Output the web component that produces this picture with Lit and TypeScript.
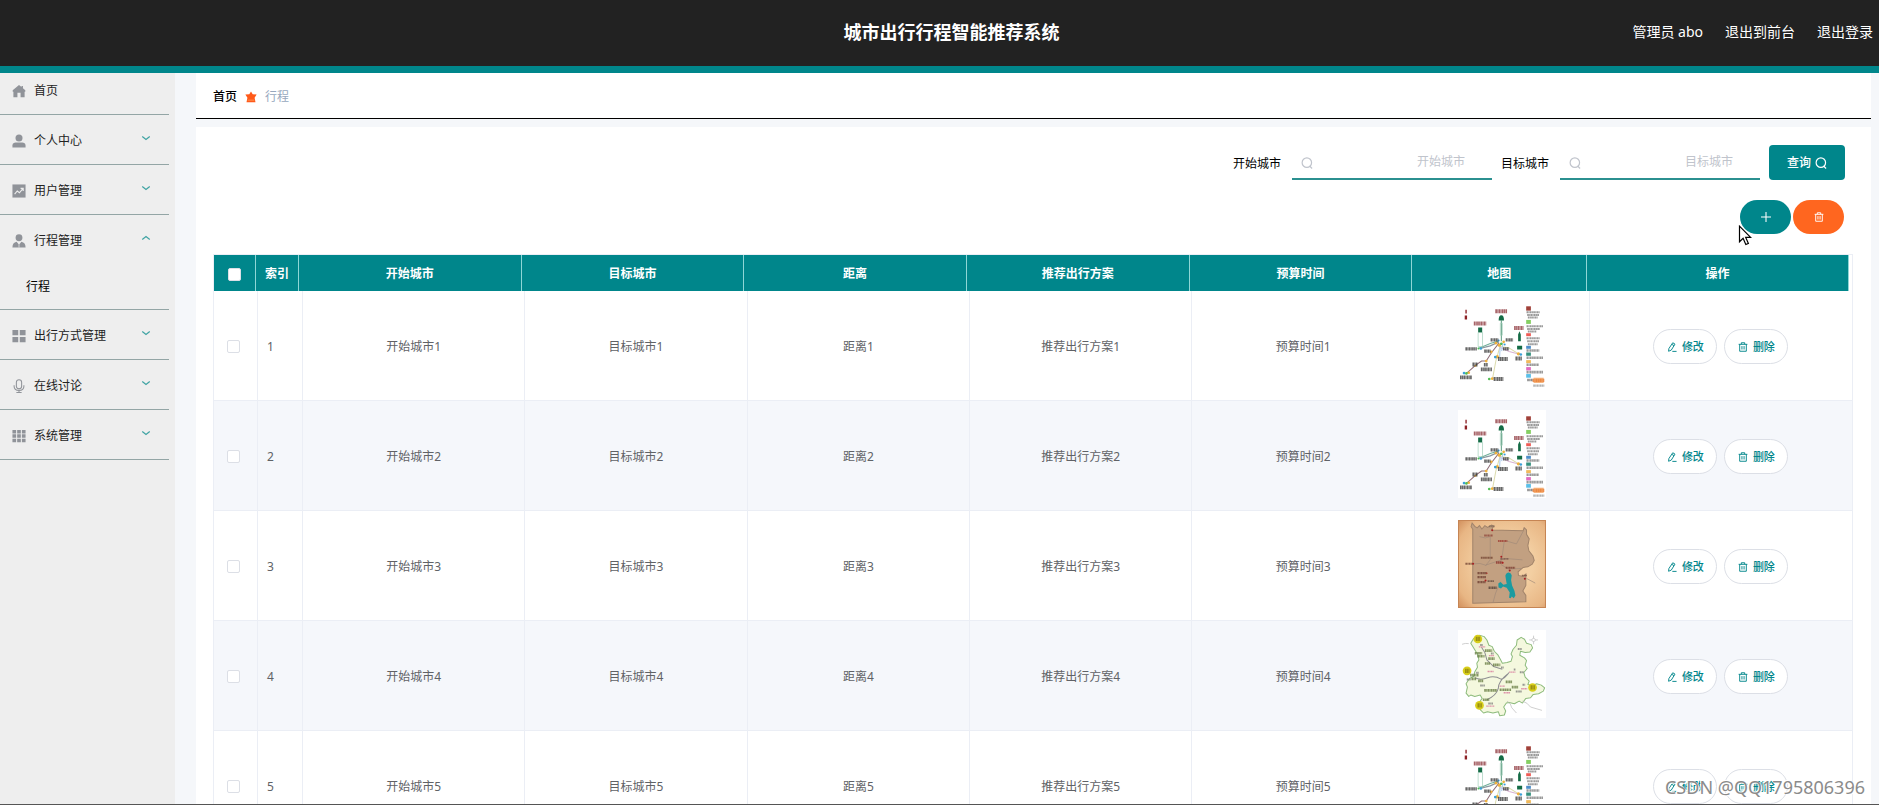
import { LitElement, html, svg, css, nothing } from "lit";
import { customElement, state } from "lit/decorators.js";

interface MenuEntry {
  label: string;
  icon: string;
  children?: string[];
  open?: boolean;
}

const icons: Record<string, unknown> = {
  home: svg`<path fill="currentColor" d="M8 1 0.8 7.2v1.6H1.6V15h4.6v-5h3.6v5h4.6V8.800h.8V7.200L12.500 4.900V2.300h-1.600v1.200z"/>`,
  user: svg`<circle cx="8" cy="4.500" r="4" fill="currentColor"/><path fill="currentColor" d="M.5 15.500v-2.300C.5 10.600 2.400 9.700 4.200 9.700h7.600c1.800 0 3.700.9 3.700 3.500v2.300z"/>`,
  chart: svg`<path fill="currentColor" d="M.5.5h15v15H.5z"/><path fill="none" stroke="#eee" stroke-width="1.300" d="M3 11.500 6 8l2.500 2L12.700 5M9.800 5h3v3"/>`,
  custom: svg`<circle cx="8" cy="4.300" r="3.900" fill="currentColor"/><path fill="currentColor" d="M.5 15.500c0-4 1.500-6 4.800-6.600L8 12.300l2.700-3.400c3.300.6 4.800 2.600 4.800 6.600z"/><path stroke="#eee" stroke-width=".8" d="M8 12v3.500"/>`,
  grid4: svg`<path fill="currentColor" d="M.5 1h6.600v6H.5zM8.900 1h6.600v6H8.900zM.5 9h6.600v6H.5zM8.900 9h6.600v6H8.900z"/>`,
  mic: svg`<rect x="5" y=".8" width="6" height="10.400" rx="3" fill="none" stroke="currentColor" stroke-width="1.200"/><path fill="none" stroke="currentColor" stroke-width="1.200" d="M2.400 7v1.200C2.400 11.300 5 13 8 13s5.600-1.700 5.600-4.800V7M8 13v2.300M5 15.400h6"/>`,
  grid9: svg`<path fill="currentColor" d="M.5 1h4.200v4H.5zM5.900 1h4.200v4H5.900zM11.300 1h4.200v4h-4.200zM.5 6h4.200v4H.5zM5.900 6h4.200v4H5.900zM11.300 6h4.200v4h-4.200zM.5 11h4.200v4H.5zM5.900 11h4.200v4H5.900zM11.300 11h4.200v4h-4.200z"/>`,
  down: svg`<path fill="none" stroke="currentColor" stroke-width="1.900" d="m2 5.500 6 5 6-5"/>`,
  up: svg`<path fill="none" stroke="currentColor" stroke-width="1.900" d="m2 10.500 6-5 6 5"/>`,
  search: svg`<circle cx="7.800" cy="7.500" r="6.300" fill="none" stroke="currentColor" stroke-width="1.600"/><path stroke="currentColor" stroke-width="1.600" d="m11.500 12 3.300 3.300"/>`,
  plus: svg`<path stroke="currentColor" stroke-width="1.700" d="M8 0v16M0 8h16"/>`,
  trash: svg`<path fill="none" stroke="currentColor" stroke-width="1.500" d="M1 3.700h14M5.300 3.500V1.200h5.400v2.300M2.700 3.700v11.100h10.600V3.700M6.300 6.500v5.500M9.700 6.500v5.500"/>`,
  edit: svg`<path fill="none" stroke="currentColor" stroke-width="1.500" d="m9.200 1.200 3.600 2.200-6 9.600-4.300 1.800.5-4.300zM7.800 3.800l3.500 2.100M8.500 15h6.800"/>`,
  star: svg`<path fill="#ff5a1a" d="m8 .5 2.300 3.700 5.200.6-2.700 4.300 1.200 6H2l1.200-6L.5 4.800l5.200-.6z"/><path fill="#ff8a4a" d="M3.500 11.500h9V13h-9z"/>`,
};

const icon = (name: string, size: string) =>
  html`<svg class="icon ${size}" viewBox="0 0 16 16" aria-hidden="true">${icons[name]}</svg>`;

/* A row of tiny illegible lettering on a thumbnail: x, y, length, colour, height. */
const scribble = (x: number, y: number, len: number, color = "#444", h = 7) => svg`
  <path d="M${x} ${y}h${len}" stroke=${color} stroke-width=${h} stroke-dasharray="5 1 3 1" opacity=".75"/>`;

const metroMap = () => html`
  <svg class="thumb" viewBox="0 0 262 265" preserveAspectRatio="none" role="img" aria-label="地图">
    <rect width="262" height="265" fill="#fff"/>
    <g fill="none" stroke-width="3">
      <path stroke="#8c6a75" d="m26 220 26-23 18-13h14l16-26 22-28"/>
      <path stroke="#8a98a0" stroke-width="4" d="m66 146 30-8 26-12"/>
      <path stroke="#6fae98" d="m60 146 38-16 22-6"/>
      <path stroke="#d9b3d4" d="m126 143 26 12 34 9"/>
      <path stroke="#dcdcae" d="m103 236 10-54 12-42 26 4 26 16"/>
      <path stroke="#a8c8ec" d="m126 130-2 42-10 2M134 130l-4 24"/>
      <path stroke="#5a9a80" d="M129 62v62"/>
      <path stroke="#9ccbb5" stroke-width="2" d="M60 98h13v42H60zM126 70h6v36h-6z"/>
    </g>
    <g fill="#146b45">
      <path d="M121 62q0-16 8-16t8 16zM60 83h12v14H60zM179 104l4-10 4 10v20h-8zM176 138h15v11h-15z"/>
    </g>
    <g fill="#f0b13c">
      <circle cx="123" cy="136" r="5"/><circle cx="136" cy="126" r="4"/><circle cx="113" cy="130" r="4"/>
      <circle cx="99" cy="156" r="4"/><circle cx="84" cy="184" r="4"/><circle cx="52" cy="198" r="3"/>
      <circle cx="180" cy="162" r="5"/><circle cx="117" cy="171" r="5"/><circle cx="32" cy="219" r="4"/><circle cx="102" cy="237" r="4"/>
    </g>
    <g fill="#3ba0d8">
      <circle cx="121" cy="122" r="3"/><circle cx="139" cy="134" r="3"/><circle cx="187" cy="164" r="4"/>
      <circle cx="111" cy="172" r="4"/><circle cx="68" cy="146" r="4"/><circle cx="18" cy="220" r="4"/>
    </g>
    <g fill="#52bd54"><circle cx="129" cy="132" r="4"/><circle cx="93" cy="238" r="4"/><circle cx="25" cy="221" r="4"/><circle cx="61" cy="146" r="3"/></g>
    <path fill="#8c2226" d="M20 47h7v12h-7zM22 29h4v12h-4z"/>
    ${scribble(111, 34, 36, "#8a3036", 12)}${scribble(47, 71, 37, "#8a3036", 12)}${scribble(167, 84, 28, "#8a3036", 12)}
    ${scribble(22, 147, 34, "#333", 10)}${scribble(97, 120, 23, "#333", 10)}${scribble(142, 120, 22, "#333", 10)}
    ${scribble(134, 147, 18, "#333", 10)}${scribble(78, 154, 20, "#333", 10)}${scribble(43, 194, 15, "#333", 12)}
    ${scribble(77, 195, 12, "#333", 10)}${scribble(68, 209, 33, "#333", 11)}${scribble(6, 233, 35, "#333", 12)}
    ${scribble(106, 238, 29, "#333", 12)}${scribble(119, 178, 29, "#333", 12)}${scribble(171, 176, 20, "#333", 12)}
    <path fill="#a04038" d="M203 19h14v13h-14z"/><path fill="#85cf62" d="M203 60h14v12h-14z"/>
    <path fill="#ef5a54" d="M203 100h14v9h-14z"/><path fill="#4d8ec9" d="M203 138h14v9h-14z"/>
    <path fill="#35917f" d="M203 158h14v10h-14z"/><path fill="#f1b95a" d="M203 181h14v9h-14z"/>
    <path fill="#e26bc0" d="M203 202h14v10h-14z"/><path fill="#58bfe8" d="M203 223h14v11h-14z"/>
    ${[37, 45, 53, 79, 87, 95, 115, 124, 133].map((y, i) => scribble(204 + (i % 3) * 2, y, [40, 36, 30, 50, 38, 26][i % 6], "#777", 6))}
    ${[152, 174, 195, 217].map((y, i) => scribble(204, y, [38, 50, 37, 50][i], "#777", 8))}
    ${scribble(206, 241, 18, "#666", 8)}
    <path fill="#f4974a" d="M225 234h30v16h-30z" opacity=".7"/>${scribble(222, 242, 36, "#e8792c", 10)}${scribble(224, 258, 33, "#999", 7)}
  </svg>`;

const parchmentMap = () => html`
  <svg class="thumb" viewBox="0 0 262 265" preserveAspectRatio="none" role="img" aria-label="地图">
    <defs>
      <radialGradient id="paper" cx=".55" cy=".5" r=".75">
        <stop offset=".4" stop-color="#f3cfa2"/><stop offset=".8" stop-color="#e8b684"/><stop offset="1" stop-color="#cf8b58"/>
      </radialGradient>
    </defs>
    <rect width="262" height="265" fill="url(#paper)"/>
    <path fill="none" stroke="#c68554" stroke-width="3" d="M1.500 1.500h259v262H1.500z"/>
    <path fill="#c2a081" stroke="#a1836a" stroke-width="3" d="M44 251V28l-5-8 3-11 8 10 7 5 7-7 7 10 9-10 8 5 12-7 6 3-6 12 94 2 3-9 7 7v13l8 14-4 20 3 16 12 15 4 14-6 11-13 8-14 2-15 13 1 11 14 3 8-7v34l-9 17 9 13v19z"/>
    <g fill="none" stroke="#a08a78" stroke-width="2">
      <path d="M64 50q18 8 32 0v70q-10 12-14 18M44 132q24-4 38 4l30-10 30-10 50 4M138 62l-6 44-6 26M140 62l34 10 20-38M128 134l22 14 38-2M126 186l-14 34-8 30M204 176l26 14"/>
    </g>
    <path fill="#1b9ba0" d="M141 168q3-10 10-10 8 1 9 9l-2 14 3 16 7 16 3 14-5 9-6-6-3 6-5-2 2-16-9-14-11-4-6 6-7-3-1-12 7-4 8 8 10-2-2-12z"/>
    ${scribble(78, 47, 26, "#8c4238", 6)}${scribble(92, 19, 18, "#806654", 5)}${scribble(119, 63, 28, "#9e3a30", 6)}
    ${scribble(68, 114, 36, "#70402f", 6)}${scribble(113, 128, 20, "#8a2d28", 7)}${scribble(22, 132, 22, "#6f4030", 6)}
    ${scribble(58, 160, 28, "#6a3a2d", 7)}${scribble(58, 172, 26, "#6a3a2d", 7)}${scribble(58, 187, 24, "#6a3a2d", 7)}
    ${scribble(88, 184, 20, "#604a3f", 5)}${scribble(91, 204, 24, "#4f3c34", 7)}${scribble(142, 144, 28, "#78372c", 6)}
    ${scribble(126, 117, 24, "#78544a", 5)}${scribble(190, 167, 16, "#6b4a3c", 5)}
    <g fill="#a81f20"><circle cx="102" cy="31" r="3"/><circle cx="129" cy="111" r="3"/><circle cx="133" cy="129" r="3"/><circle cx="45" cy="132" r="3"/><circle cx="86" cy="160" r="2"/><circle cx="82" cy="182" r="3"/><circle cx="199" cy="177" r="3"/><circle cx="154" cy="152" r="3"/></g>
  </svg>`;

const provinceMap = () => html`
  <svg class="thumb" viewBox="0 0 262 265" preserveAspectRatio="none" role="img" aria-label="地图">
    <rect width="262" height="265" fill="#fff"/>
    <path fill="#f4f8de" stroke="#8dbb7c" stroke-width="3" stroke-linejoin="round" d="m38 40 8-14 18-10 14 4 8 10 6 16 10 4 6 14 10 10 8 14 6 12 14-2 12-4 4-14-4-8 6-14 10-12 2-16 12-8 10 6 6 12 14 4 4 10-8 12-14 2-14-4-2 12 14 8 6 8-4 14 6 10-10 12 4 14 12 12-4 10 14 4 12-6 14 4 10 8-4 10-14 8-16 2-8 10-14 2-10 14-10-6-14 8-16-4-8 2-8 12 6 12-4 12-14 2-4-12-16 4-16-4-12 4-10-10 4-12-4-14 6-8-6-10-16 4-12-4-6 4-8-10 4-18-4-10 10-16 12-6 4-14 8-14-2-12 6-10-2-14z"/>
    <g fill="none" stroke="#8f8f92" stroke-width="3">
      <path d="m70 52 10 16 6 22 20 20 26 8M50 144q18 8 38 0 20-8 40 4 12-2 24-20M148 132q-28 22-28 44-6 22-34 34"/>
      <path stroke="#b8b8b8" stroke-width="2" d="M12 43q10-4 20-2M146 214q12 6 14 20l14 16M192 214q14 4 24 18l34 10M225 17v26M212 30h26"/>
    </g>
    <circle cx="225" cy="30" r="5" fill="#fff" stroke="#888"/>
    <g fill="#d8ce1a"><circle cx="59" cy="27" r="13"/><circle cx="27" cy="123" r="13"/><circle cx="222" cy="173" r="13"/><circle cx="64" cy="227" r="13"/></g>
    ${[[53, 27], [21, 123], [216, 173], [58, 227]].map(([x, y]) => scribble(x, y, 13, "#857a10", 13))}
    ${[[50, 70, 22], [57, 79, 22], [80, 62, 22], [90, 86, 20], [80, 101, 16], [104, 105, 22], [36, 136, 26], [60, 153, 16], [78, 182, 38], [124, 180, 34], [142, 156, 20], [160, 172, 20], [74, 210, 20], [40, 147, 14]].map(([x, y, l]) => scribble(x, y, l, "#5f7539", 8))}
    ${[[62, 51, 20], [92, 77, 16], [152, 127, 20], [188, 177, 18], [136, 189, 20], [84, 229, 24], [124, 169, 16], [88, 125, 18]].map(([x, y, l]) => scribble(x, y, l, "#d77298", 4))}
    ${[[66, 45, 8], [98, 71, 8], [128, 113, 8], [166, 119, 6], [184, 127, 12], [54, 129, 8], [192, 165, 8], [172, 185, 18], [26, 149, 12], [178, 57, 12], [66, 167, 14], [90, 221, 14]].map(([x, y, l]) => scribble(x, y, l, "#777", 6))}
  </svg>`;

const thumbs = [metroMap, metroMap, parchmentMap, provinceMap, metroMap];

@customElement("app-root")
export class AppRoot extends LitElement {
  @state() private menu: MenuEntry[] = [
    { label: "首页", icon: "home" },
    { label: "个人中心", icon: "user", children: [] },
    { label: "用户管理", icon: "chart", children: [] },
    { label: "行程管理", icon: "custom", children: ["行程"], open: true },
    { label: "出行方式管理", icon: "grid4", children: [] },
    { label: "在线讨论", icon: "mic", children: [] },
    { label: "系统管理", icon: "grid9", children: [] },
  ];

  @state() private selected = new Set<number>();

  private readonly columns = ["开始城市", "目标城市", "距离", "推荐出行方案", "预算时间"];

  static styles = css`
    :host {
      --teal: #00868b;
      --line: #ebeef5;
      display: flex;
      flex-direction: column;
      height: 100vh;
      overflow: hidden;
      position: relative;
      box-sizing: border-box;
      border-bottom: 1px solid #555;
      background: #f5f7fa;
      color: #222;
      font: 12px/16px "Noto Sans", "Noto Sans CJK SC", sans-serif;
    }
    *, *::before, *::after { box-sizing: border-box; }
    button, input { font: inherit; }
    button { cursor: pointer; }
    a { color: inherit; text-decoration: none; }
    .icon { display: block; flex: none; }
    .s10 { width: 10px; height: 10px; }
    .s12 { width: 12px; height: 12px; }
    .s14 { width: 14px; height: 14px; }

    .top {
      flex: none;
      display: grid;
      grid-template-columns: 1fr auto 1fr;
      align-items: center;
      height: 73px;
      padding: 0 6px 2px 30px;
      border-bottom: 7px solid var(--teal);
      background: #222;
      color: #fff;
    }
    .title { grid-column: 2; margin: 0; font-size: 18px; line-height: 24px; font-weight: 700; }
    .account { display: flex; justify-content: flex-end; gap: 22px; font-size: 14px; line-height: 20px; }

    .body { flex: 1; min-height: 0; display: flex; }
    .side { flex: none; width: 175px; padding-right: 6px; background: #eee; overflow: hidden; }
    .menu { list-style: none; margin: -8px 0 0; padding: 0; }
    .menu > li { border-bottom: 1px solid #93a5a5; }
    .entry {
      display: flex;
      align-items: center;
      gap: 8px;
      width: 100%;
      height: 49px;
      padding: 3px 18px 0 12px;
      border: 0;
      background: none;
      color: #222;
      text-align: left;
    }
    .entry .s14 { color: #909399; }
    .entry .label { flex: 1; }
    .entry .s10 { color: #3fa3a3; margin-bottom: 6px; }
    .sub { display: block; height: 45px; padding: 15px 26px; color: #000; }

    .main { flex: 1; min-width: 0; padding: 0 8px 0 21px; overflow: hidden; }
    .crumbs {
      display: flex;
      align-items: center;
      gap: 8px;
      height: 46px;
      padding: 3px 17px 0;
      background: #fff;
      border-bottom: 1px solid #000;
    }
    .crumbs .home { font-weight: 500; color: #000; }
    .crumbs .here { color: #97a8be; }
    .card { margin-top: 8px; padding: 18px 18px 18px 17px; background: #fff; }

    .search { display: flex; justify-content: flex-end; align-items: center; gap: 9px; padding-right: 8px; }
    .field { display: flex; align-items: center; gap: 11px; color: #000; }
    .field label { padding-top: 2px; }
    .box {
      display: flex;
      align-items: center;
      width: 200px;
      height: 35px;
      padding: 0 27px 0 9px;
      border-bottom: 2px solid #2b9090;
      color: #c0c4cc;
    }
    .box .s12 { margin-top: 2px; }
    .box input { flex: 1; min-width: 0; height: 30px; padding: 0; border: 0; outline: 0; background: none; text-align: right; color: #606266; }
    .box input::placeholder { color: #c0c4cc; opacity: 1; }
    .query {
      display: flex;
      align-items: center;
      justify-content: center;
      gap: 4px;
      width: 76px;
      height: 35px;
      padding: 0;
      border: 0;
      border-radius: 4px;
      background: var(--teal);
      color: #fff;
      font-weight: 500;
    }
    .tools { display: flex; justify-content: flex-end; gap: 2px; padding: 20px 9px 20px 8px; }
    .round { display: grid; place-items: center; width: 51px; height: 34px; padding: 0; border: 0; border-radius: 17px; background: var(--teal); color: #fff; }
    .round.warn { background: #ff661f; }

    .grid { border: solid var(--line); border-width: 1px 1px 0 0; }
    table { width: 100%; table-layout: fixed; border-collapse: separate; border-spacing: 0; }
    .head { width: calc(100% - 3px); }
    .c-min { width: 45px; }
    .head .c-min { width: 43px; }
    .c-map { width: 175px; }
    .c-op { width: 16%; }
    th, td { padding: 2px 0 0; text-align: center; }
    th { height: 36px; background: var(--teal); color: #fff; font-weight: 700; border-right: 1px solid #8fd6d6; }
    td { height: 110px; color: #606266; border-right: 1px solid var(--line); border-bottom: 1px solid var(--line); background: #fff; }
    th:first-child, td:first-child { border-left: 1px solid var(--line); }
    td:last-child { border-right: 0; }
    td:first-child { padding-right: 4px; }
    tbody tr:nth-child(even) td { background: #f5f7fb; }
    td.index { text-align: left; padding-left: 9px; }
    .check {
      appearance: none;
      display: block;
      width: 13px;
      height: 13px;
      margin: 0 auto;
      border: 1px solid #dcdfe6;
      border-radius: 2px;
      background: #fff;
    }
    .check:checked { background: #7cc0c2; }
    td.map { vertical-align: top; padding-top: 9px; }
    .thumb { display: block; width: 88px; height: 88px; margin: 0 auto; }
    .ops { display: flex; justify-content: center; gap: 7px; }
    .op {
      display: flex;
      align-items: center;
      justify-content: center;
      gap: 5px;
      width: 64px;
      height: 35px;
      padding: 0;
      border: 1px solid #dcdfe6;
      border-radius: 18px;
      background: #fff;
      color: var(--teal);
      font-size: 11px;
      font-weight: 500;
    }

    .pointer { position: absolute; left: 1738px; top: 225px; width: 14px; height: 21px; }
    .mark {
      position: absolute;
      right: 14px;
      bottom: 4px;
      font-size: 18px;
      line-height: 26px;
      color: #8b8b8b;
      text-shadow: 1px 1px 0 #fff, -1px -1px 0 #fff;
      pointer-events: none;
    }
  `;

  private toggleMenu(i: number) {
    this.menu = this.menu.map((m, n) => (n === i && m.children ? { ...m, open: !m.open } : m));
  }

  private toggleRow(n: number) {
    const next = new Set(this.selected);
    next.has(n) ? next.delete(n) : next.add(n);
    this.selected = next;
  }

  private toggleAll(e: Event) {
    this.selected = new Set((e.target as HTMLInputElement).checked ? thumbs.map((_, i) => i + 1) : []);
  }

  private cols() {
    return html`<colgroup>
      <col class="c-min" /><col class="c-min" />
      ${this.columns.map(() => html`<col />`)}
      <col class="c-map" /><col class="c-op" />
    </colgroup>`;
  }

  private field(label: string, id: string) {
    return html`<div class="field">
      <label for=${id}>${label}</label>
      <div class="box">${icon("search", "s12")}<input id=${id} type="text" placeholder=${label} /></div>
    </div>`;
  }

  private row(n: number) {
    return html`<tr>
      <td><input class="check" type="checkbox" aria-label="选择 ${n}" .checked=${this.selected.has(n)} @change=${() => this.toggleRow(n)} /></td>
      <td class="index">${n}</td>
      ${this.columns.map((c) => html`<td>${c}${n}</td>`)}
      <td class="map">${thumbs[n - 1]()}</td>
      <td>
        <div class="ops">
          <button class="op" type="button">${icon("edit", "s10")}<span>修改</span></button>
          <button class="op" type="button">${icon("trash", "s10")}<span>删除</span></button>
        </div>
      </td>
    </tr>`;
  }

  render() {
    return html`
      <header class="top">
        <h1 class="title">城市出行行程智能推荐系统</h1>
        <nav class="account">
          <span>管理员 abo</span><a href="#front">退出到前台</a><a href="#logout">退出登录</a>
        </nav>
      </header>
      <div class="body">
        <nav class="side">
          <ul class="menu">
            ${this.menu.map(
              (m, i) => html`<li>
                <button class="entry" type="button" @click=${() => this.toggleMenu(i)}>
                  ${icon(m.icon, "s14")}<span class="label">${m.label}</span>
                  ${m.children ? icon(m.open ? "up" : "down", "s10") : nothing}
                </button>
                ${m.open ? m.children?.map((c) => html`<a class="sub" href="#trip">${c}</a>`) : nothing}
              </li>`
            )}
          </ul>
        </nav>
        <main class="main">
          <nav class="crumbs">
            <a class="home" href="#home">首页</a>${icon("star", "s12")}<span class="here">行程</span>
          </nav>
          <section class="card">
            <form class="search" @submit=${(e: Event) => e.preventDefault()}>
              ${this.field("开始城市", "from")} ${this.field("目标城市", "to")}
              <button class="query" type="submit"><span>查询</span>${icon("search", "s12")}</button>
            </form>
            <div class="tools">
              <button class="round" type="button" aria-label="新增">${icon("plus", "s10")}</button>
              <button class="round warn" type="button" aria-label="删除">${icon("trash", "s10")}</button>
            </div>
            <div class="grid">
              <table class="head">
                ${this.cols()}
                <thead>
                  <tr>
                    <th><input class="check" type="checkbox" aria-label="全选" @change=${this.toggleAll} /></th>
                    <th>索引</th>
                    ${this.columns.map((c) => html`<th>${c}</th>`)}
                    <th>地图</th>
                    <th>操作</th>
                  </tr>
                </thead>
              </table>
              <table>
                ${this.cols()}
                <tbody>${thumbs.map((_, i) => this.row(i + 1))}</tbody>
              </table>
            </div>
          </section>
        </main>
      </div>
      <svg class="pointer" viewBox="0 0 14 21" aria-hidden="true">
        <path fill="#fff" stroke="#000" stroke-width="1.200" d="M1.500 1.200v15.600l3.600-3.500 2.700 6.200 2.600-1.100-2.700-6h4.900z" />
      </svg>
      <div class="mark">CSDN @QQ1795806396</div>
    `;
  }
}
